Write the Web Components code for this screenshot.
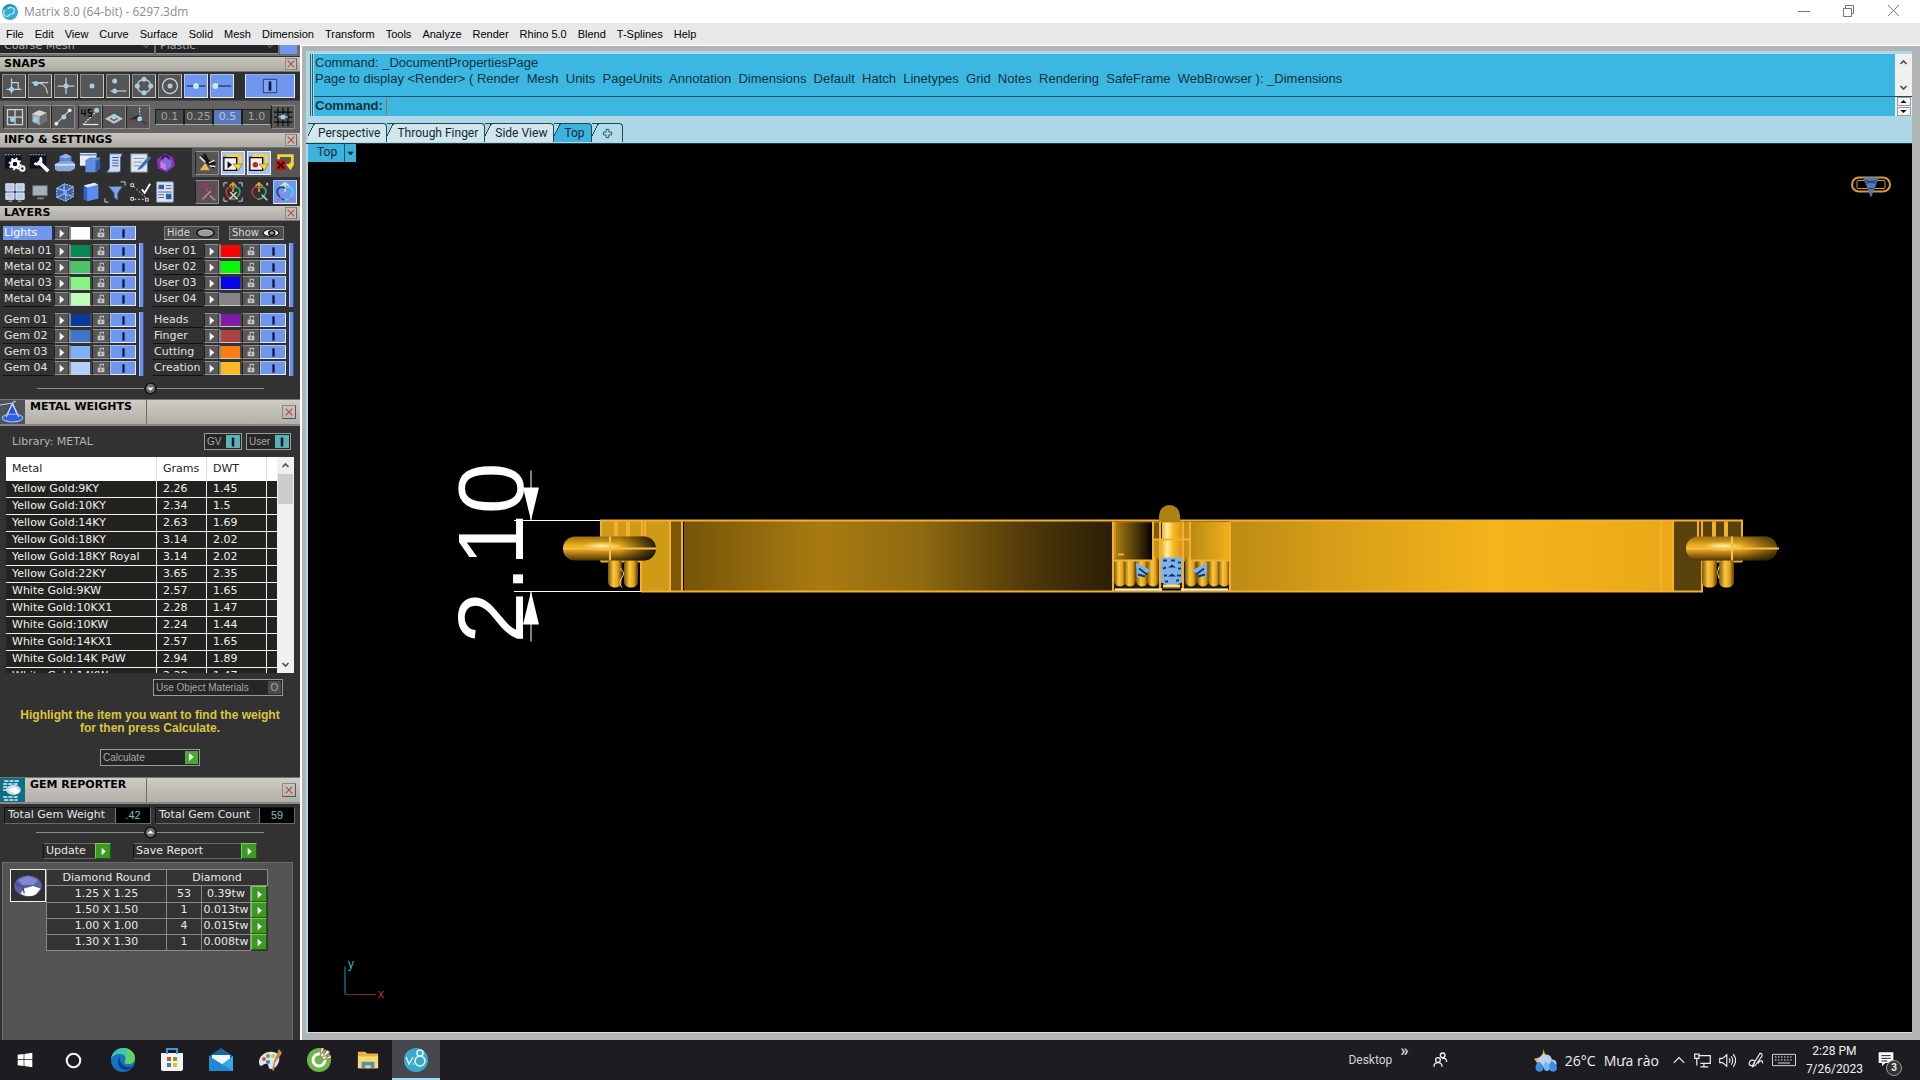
<!DOCTYPE html>
<html lang="en">
<head>
<meta charset="utf-8">
<title>Matrix 8.0</title>
<style>
html, body { margin: 0; height: 100%; background: #323232; overflow: hidden; }
</style>
</head>
<body>
<matrix-app></matrix-app>
<script>
const ICONS = {
  logo: '<circle cx="12" cy="12" r="12" fill="#3aa9cc"/><path d="M5 9a5 5 0 1 0 7 6M13 15a5 5 0 1 0-4-7" fill="none" stroke="#a9e6f5" stroke-width="2"/><path d="M3 7a10 10 0 0 1 15-3" fill="none" stroke="#1b7fa3" stroke-width="2"/>',
  min: '<path d="M6 11.5h12" stroke="#777" fill="none"/>',
  restore: '<path d="M6.5 8.5h8v8h-8zM8.5 8.5v-3h8v8h-2" stroke="#777" fill="none"/>',
  close: '<path d="M6 5l11 11M17 5L6 16" stroke="#777" fill="none"/>',
  x: '<path d="M4 4l16 16M20 4L4 20" stroke="#b0453f" stroke-width="2.5" fill="none"/>',
  perp: '<g stroke="#c9cdd0" stroke-width="1.5" fill="none"><path d="M9 3v18M3 16h18M9 8h8v8"/></g><circle cx="9" cy="16" r="3" fill="#9fd0ee"/>',
  tan: '<path d="M2 8h20M8 8c7 0 12 5 13 13" stroke="#c9cdd0" stroke-width="1.5" fill="none"/><circle cx="7" cy="9" r="3" fill="#9fd0ee"/>',
  cross: '<path d="M12 2v20M2 12h20" stroke="#c9cdd0" stroke-width="1.5"/><circle cx="12" cy="12" r="3" fill="#9fd0ee"/>',
  pt: '<circle cx="12" cy="12" r="3" fill="#9fd0ee"/>',
  near: '<path d="M3 18h19" stroke="#c9cdd0" stroke-width="1.5"/><circle cx="8" cy="6" r="3" fill="#9fd0ee"/><circle cx="8" cy="18" r="3" fill="#9fd0ee"/>',
  quad: '<circle cx="12" cy="12" r="8" stroke="#c9cdd0" stroke-width="1.5" fill="none"/><g fill="#9fd0ee"><circle cx="12" cy="4" r="3"/><circle cx="12" cy="20" r="3"/><circle cx="4" cy="12" r="3"/><circle cx="20" cy="12" r="3"/></g>',
  cen: '<circle cx="12" cy="12" r="9" stroke="#d4d4d4" stroke-width="1.5" fill="none"/><circle cx="12" cy="12" r="3" fill="#9fd0ee"/>',
  mid: '<path d="M1 12h22" stroke="#23345f" stroke-width="1.5"/><circle cx="12" cy="12" r="3.5" fill="#c4ecff"/>',
  end: '<path d="M4 12h19" stroke="#23345f" stroke-width="1.5"/><circle cx="4" cy="12" r="3.5" fill="#c4ecff"/>',
  on: '<path d="M2 2h20v20H2z" fill="#7ea2f5" stroke="#27407f" stroke-width="1.5"/><path d="M12 5v14" stroke="#0c1634" stroke-width="4"/>',
  grid2: '<path d="M3 3h18v18H3zM12 3v18M3 12h18" stroke="#d0d4d8" stroke-width="1.5" fill="none"/><circle cx="9" cy="15" r="3" fill="#9fd0ee"/>',
  cubeg: '<path d="M4 8l8-4 9 3v10l-8 5-9-4z" fill="#a8a8a6"/><path d="M13 11l8-4v10l-8 5z" fill="#6f6f6f"/><path d="M4 8l8-4 9 3-8 4z" fill="#d5d5d3"/><circle cx="8" cy="15" r="3" fill="#9fd0ee"/>',
  line2: '<path d="M4 20L20 4" stroke="#c9cdd0" stroke-width="1.5"/><circle cx="4" cy="20" r="2.3" fill="#eee"/><circle cx="20" cy="4" r="2.3" fill="#eee"/><circle cx="13" cy="12" r="3" fill="#9fd0ee"/>',
  deg: '<path d="M4 21L20 5" stroke="#e8e8e8" stroke-dasharray="2 1.5" stroke-width="1.5"/><path d="M4 21h18" stroke="#e8e8e8" stroke-width="1.5"/><path d="M2 3v5h5M6 3v8M14 3h-4v4h4v4h-4" stroke="#0a0a0a" stroke-width="1.5" fill="none"/><circle cx="20" cy="4" r="3" fill="#9fd0ee"/>',
  plane: '<path d="M1 14l11-6 11 6-11 6z" fill="#c2c4c6"/><path d="M7 14l5-3 5 3-5 3z" fill="#55585c"/><circle cx="12" cy="12" r="3" fill="#9fd0ee"/>',
  persp: '<path d="M14 1v12" stroke="#ddd" stroke-width="1.5" stroke-dasharray="2 1.5"/><path d="M1 15l13-6v6z" fill="#13233f"/><path d="M1 15l13 0 9 6" stroke="#7d2730" stroke-width="2" fill="none"/><circle cx="14" cy="14" r="3" fill="#9fd0ee"/>',
  hash: '<path d="M1 6h22M1 12h22M1 18h22M6 1v22M12 1v22M18 1v22" stroke="#0a0a0a" stroke-width="1.5"/><path d="M6 12h12" stroke="#9fd0ee" stroke-width="1.5"/><circle cx="12" cy="12" r="3" fill="#9fd0ee"/>',
  gears: '<path d="M1 2h18v16H1z" fill="#0b1020"/><path d="M1 3h18" stroke="#b9c3dd" stroke-dasharray="2 1"/><circle cx="12" cy="13" r="4" fill="none" stroke="#fff" stroke-width="3"/><circle cx="12" cy="13" r="6" fill="none" stroke="#fff" stroke-width="2" stroke-dasharray="2 2.7"/><circle cx="20" cy="18" r="2.5" fill="none" stroke="#fff" stroke-width="2"/>',
  wrench: '<path d="M1 2h18v16H1z" fill="#0b1020"/><path d="M1 3h18" stroke="#b9c3dd" stroke-dasharray="2 1"/><path d="M10 10l11 11" stroke="#fff" stroke-width="4"/><path d="M12 6a4 4 0 1 1-6 6" fill="none" stroke="#fff" stroke-width="3"/>',
  slab: '<path d="M6 5l7-3 6 3v7H6z" fill="#5b87d2"/><path d="M6 5l7-3 6 3-6 2z" fill="#8fb4ee"/><path d="M1 13l6-3h13l3 3v5l-5 3H4l-3-2z" fill="#88a9e0"/><path d="M1 14h22" stroke="#e4edff" stroke-width="1.5"/>',
  boxdoc: '<path d="M1 1h18v14H1z" fill="#e9edf6"/><path d="M1 3h18" stroke="#7d94c2" stroke-width="2"/><path d="M7 9l5-3h11v12l-5 4H7z" fill="#5f8ede"/><path d="M18 10v12l5-4V7z" fill="#2f5bab"/>',
  scroll: '<path d="M6 2h14l-2 4v14c0 2-2 2-3 2H3l3-4z" fill="#cfdcf4" stroke="#4267ac"/><path d="M9 6h7M9 9h7M9 12h7M9 15h7" stroke="#2d4f90"/>',
  note: '<path d="M2 2h18v20H2z" fill="#dfe6ee" stroke="#6d7f98"/><path d="M5 7h12M5 11h9M5 15h6" stroke="#7f91aa"/><path d="M22 4L11 16l-2 4 5-2L24 7z" fill="#3f6fb6"/>',
  purple: '<path d="M3 8l9-6 9 4 2 9-9 7-10-4z" fill="#8d2fb2"/><path d="M7 10l6-4 6 3v7l-6 4-6-3z" fill="#7a6fd8"/><path d="M7 10l6 3v7l-6-3z" fill="#c978e4"/><path d="M9 8c0-5 7-5 7 0" stroke="#3f1460" fill="none" stroke-width="2"/>',
  hands: '<path d="M5 4l7 7 8 6M9 2l4 8 8 3" stroke="#151515" stroke-width="3" fill="none"/><path d="M4 5l6 6" stroke="#ddd" stroke-width="2"/><path d="M10 12l5 8H4z" fill="#f0b64c"/><path d="M14 12l6-3M15 15l6 1" stroke="#eee" stroke-width="1.5"/>',
  rec: '<path d="M2 6h14v14H2z" fill="#eef2f6" stroke="#101010" stroke-width="1.5"/><path d="M5 4h15v9h-3" stroke="#f6d631" stroke-width="3" fill="none"/><path d="M12 13h10l-4 7z" fill="#f6d631" stroke="#6b5a10" stroke-width=".6"/><path d="M6 10l5 4-5 4z" fill="#111"/>',
  recr: '<path d="M2 6h14v14H2z" fill="#eef2f6" stroke="#101010" stroke-width="1.5"/><path d="M5 4h15v9h-3" stroke="#f6d631" stroke-width="3" fill="none"/><path d="M12 13h10l-4 7z" fill="#f6d631" stroke="#6b5a10" stroke-width=".6"/><circle cx="8" cy="14" r="3" fill="#c22"/>',
  recx: '<path d="M5 8V4h15v9h-3" stroke="#f6d631" stroke-width="3" fill="none"/><path d="M13 13h9l-4 7z" fill="#f6d631"/><path d="M2 9h11v11H2z" fill="#c01818"/><path d="M4 11l7 7M11 11l-7 7" stroke="#200" stroke-width="2"/>',
  panes: '<path d="M2 3h9v8H2zM13 3h9v8h-9zM2 13h9v7H2zM13 13h9v7h-9z" fill="#b9cbed" stroke="#f2f6ff"/><path d="M5 22h4M15 22h4" stroke="#ddd"/>',
  monitor: '<path d="M4 5h16v11H4z" fill="#a8afb9" stroke="#63686f"/><path d="M9 19h7" stroke="#7f858e" stroke-width="2"/>',
  cubew: '<path d="M3 8l8-5 10 3v11l-8 5-10-4z" fill="#3b68b4" stroke="#cfe0ff" stroke-dasharray="2 1"/><path d="M3 8l10 3 8-5M13 11v11M11 3v11l-8 4M11 14l10 3" stroke="#bcd3ff" fill="none"/>',
  book: '<path d="M5 5l12-3 4 2v15L9 22l-4-2z" fill="#2f63c7"/><path d="M9 7l12-3v15L9 22z" fill="#5b8ef0"/><path d="M5 5l12-3 4 2-12 3z" fill="#e9eefa"/>',
  funnel: '<path d="M5 6h15l-5 7v8l-4-3v-5z" fill="#7ea8e6" stroke="#3a5f9d"/><path d="M18 1h5v4M1 19v4h4" stroke="#ddd" fill="none"/>',
  nodes: '<path d="M2 3h3v3H2zM2 18h3v3H2zM18 19h3v3h-3z" stroke="#eee" fill="none"/><path d="M5 6l14 13M6 20h12" stroke="#eee" stroke-dasharray="2 2"/><path d="M14 9l3 4 6-10" stroke="#fff" stroke-width="2" fill="none"/>',
  report: '<path d="M3 1h18v22H3z" fill="#dce6f2" stroke="#8aa0bd"/><path d="M5 4h6v5H5zM13 14h6v6h-6z" fill="#345a98"/><path d="M13 5h6M13 8h6M5 12h14M5 15h6M5 18h6" stroke="#345a98"/>',
  knot: '<g fill="none" stroke-width="1.8"><path d="M12 3v9" stroke="#a04d50"/><path d="M12 6c-6-4-10 2-7 8 2 3 5 4 7 3" stroke="#b3266e"/><path d="M12 6c6-4 10 2 7 8-2 3-5 4-7 3" stroke="#8e2d63"/><path d="M7 20l9-9M21 21l-6-5" stroke="#a88"/></g>',
  knot2: '<path d="M2 6V2h4M18 2h4v4M2 18v4h4M18 22h4v-4" stroke="#ddd" fill="none"/><g fill="none" stroke-width="1.8"><path d="M12 2v10M8 6l4-4 4 4" stroke="#e6a12c"/><path d="M12 8c-5-4-9 2-7 6 2 4 5 6 9 6" stroke="#b83a32"/><path d="M12 8c5-4 9 2 7 6-2 4-5 6-9 6" stroke="#2ea57e"/><path d="M8 20l8-8M17 20l-8-8" stroke="#d8c4b4"/></g>',
  knot3: '<g fill="none" stroke-width="1.8"><path d="M12 2v10M8 6l4-4 4 4" stroke="#e6a12c"/><path d="M12 8c-5-4-9 2-7 6 2 4 5 6 9 6" stroke="#b83a32"/><path d="M12 8c5-4 9 2 7 6-2 4-5 6-9 6" stroke="#2ea57e"/><path d="M15 15l6 6M21 2v3" stroke="#d8c4b4"/></g>',
  knot4: '<g fill="none" stroke-width="1.8"><path d="M12 2v10M7 6l5-4 5 4" stroke="#e9dfae"/><path d="M12 8c-6-4-10 2-8 6 2 4 6 7 9 7" stroke="#27407f"/><path d="M12 8c6-4 10 2 8 6-2 4-6 7-9 7" stroke="#3edbf0"/><path d="M3 21l6-4M21 21l-6-4" stroke="#d65fb0"/></g>',
  tri: '<path d="M8 3l10 9-10 9z" fill="#f4f4f4"/>',
  lock: '<path d="M4 11h16v11H4z" fill="#c4c4c4"/><path d="M10 11V3h8v5" stroke="#c4c4c4" stroke-width="2.5" fill="none"/><path d="M12 14v5" stroke="#444" stroke-width="2.5"/>',
  bar: '<path d="M12 3v18" stroke="#0b1538" stroke-width="5"/>',
  oval: '<ellipse cx="12" cy="12" rx="11" ry="7" fill="#9a9a9a" stroke="#111" stroke-width="2"/><path d="M4 10c3-4 13-4 16 0" stroke="#ccc" fill="none"/>',
  eye: '<path d="M1 12c4-9 18-9 22 0-4 8-18 8-22 0z" fill="#f2f2f2" stroke="#111" stroke-width="1.5"/><circle cx="13" cy="12" r="4" fill="#999" stroke="#000" stroke-width="2"/>',
  down: '<circle cx="12" cy="12" r="10" fill="#6a6a6a" stroke="#101010" stroke-width="2.5"/><path d="M6 10h12l-6 6z" fill="#fff"/>',
  up: '<circle cx="12" cy="12" r="10" fill="#6a6a6a" stroke="#101010" stroke-width="2.5"/><path d="M6 14h12l-6-6z" fill="#fff"/>',
  scale: '<rect width="24" height="24" fill="#505256"/><path d="M12 4l6 14H5z" fill="#1f53cf" stroke="#dbe6ff"/><ellipse cx="12" cy="18" rx="10" ry="4" fill="#2e63e0" stroke="#a9c0f5"/><path d="M0 5l12-2 3-2M12 3l6 14M12 3L6 17" stroke="#bdd2ff" fill="none"/>',
  gemrep: '<rect width="24" height="24" fill="#0d6e86"/><path d="M4 3h14M3 6h14M3 9h9M3 12h5M3 19h15M4 22h13" stroke="#d8f4fa" stroke-width="1.5" stroke-dasharray="4 1"/><ellipse cx="13" cy="12" rx="7" ry="5" fill="#c9dfe8"/><path d="M8 12l6-3 5 4-4 3z" fill="#fff"/>',
  gtri: '<path d="M8 4l9 8-9 8z" fill="#fff"/>',
  gem: '<ellipse cx="12" cy="12" rx="11" ry="8.5" fill="#5961a8"/><path d="M4 7l8-3 8 3-3 4H7z" fill="#7f8bd0"/><path d="M6 18l3-4 7-2 6 2-4 5c-4 2-9 1-12-1z" fill="#fff"/><path d="M2 10l6 3 1 5" stroke="#3c4690" fill="none"/>',
  chevU: '<path d="M4 16l8-8 8 8" stroke="#505050" stroke-width="4.5" fill="none"/>',
  chevD: '<path d="M4 8l8 8 8-8" stroke="#505050" stroke-width="4.5" fill="none"/>',
  spinU: '<path d="M1 19h22L12 5z" fill="#111"/>',
  spinD: '<path d="M1 5h22L12 19z" fill="#111"/>',
  plus: '<path d="M9 3h6v6h6v6h-6v6H9v-6H3V9h6z" fill="none" stroke="#1d5568" stroke-width="2"/>',
  win: '<path d="M1 4l9-1v8H1zM11 3l12-2v10H11zM1 12h9v9l-9-1zM11 12h12v11l-12-2z" fill="#fff"/>',
  cortana: '<circle cx="12" cy="12" r="9.5" fill="none" stroke="#f4f4f4" stroke-width="3"/>',
  edge: '<circle cx="12" cy="12" r="12" fill="#1673c4"/><path d="M0 11C1 4 6 0 12 0c7 0 12 5 12 10 0 4-3 6-7 6-3 0-4-1-3-3 2-4-1-7-5-7-4 0-8 2-9 5z" fill="#3cc6b0"/><path d="M12 0c7 0 12 5 12 10 0 4-3 6-7 6-3 0-4-1-3-3 1-2 1-4 0-5 4-1 2-6-2-8z" fill="#62d06b"/><path d="M9 9c-4 4-2 12 5 13 4 0 7-2 8-4-8 3-14-2-13-9z" fill="#0b3e86"/>',
  store: '<path d="M1 5h22v16q0 2-2 2H3q-2 0-2-2z" fill="#f3f3f3"/><path d="M7 6V1h10v5" stroke="#3a9bdc" stroke-width="2" fill="none"/><path d="M7 9h4v4H7z" fill="#d9512c"/><path d="M13 9h4v4h-4z" fill="#77a52b"/><path d="M7 15h4v4H7z" fill="#2a7fc4"/><path d="M13 15h4v4h-4z" fill="#e9b52a"/>',
  mail: '<path d="M0 8l12-8 12 8v15H0z" fill="#1a64a8"/><path d="M3 7h18v10H3z" fill="#eef6fc"/><path d="M0 8l12 9 12-9v15H0z" fill="#3aa8e6"/><path d="M0 8l24 15H0z" fill="#2089d2"/>',
  paint: '<path d="M1 14C1 8 8 3 15 4c6 1 7 5 6 9-1 5-5 8-8 8-4 0-1-4-4-5-3-1-4 2-6 2-1 0-2-2-2-4z" fill="#dde5ee"/><circle cx="6" cy="11" r="2" fill="#d4553f"/><circle cx="10" cy="8" r="2" fill="#57a845"/><circle cx="15" cy="8" r="2" fill="#e7bd38"/><circle cx="10" cy="14" r="2" fill="#3d7ec7"/><path d="M21 1l3 4-7 10-1 8-2-1 2-9z" fill="#c08a58"/>',
  coc: '<circle cx="12" cy="12" r="12" fill="#6cb74a"/><circle cx="12" cy="12" r="6" fill="none" stroke="#fff" stroke-width="3"/><path d="M13 9l1-9h3zM15 10l5-8 3 2zM16 12l8-5v3z" fill="#fff" stroke="#b5533f" stroke-width=".7"/>',
  folder: '<path d="M1 3h8l2 2h12v16H1z" fill="#e9b43c"/><path d="M1 8h22v13H1z" fill="#fbd876"/><path d="M5 21v-7h14v7h-4v-3H9v3z" fill="#4f93c0"/>',
  v8: '<circle cx="12" cy="12" r="12" fill="#3aa9cc"/><path d="M2 9l3 7 4-7M9 16h1" stroke="#e8faff" stroke-width="1.3" fill="none"/><circle cx="16" cy="13" r="5" fill="none" stroke="#e8faff" stroke-width="1.5"/><circle cx="16" cy="5" r="3" fill="none" stroke="#e8faff" stroke-width="1.5"/>',
  people: '<g fill="none" stroke="#f0f0f0" stroke-width="2"><circle cx="9" cy="12" r="3.5"/><path d="M3 22c0-8 12-8 12 0"/><circle cx="16" cy="5" r="3.5"/><path d="M15 10c4-2 7 1 7 5"/></g>',
  weather: '<path d="M11 1c0 5-3 9-9 9 2 5 8 7 13 4z" fill="#f0b040"/><path d="M7 18a5 5 0 0 1 1-9 6 6 0 0 1 11 2 4 4 0 0 1 1 8z" fill="#bcd0ee"/><path d="M6 13c-8 10 5 13 5 6 0-2-2-5-5-6zM19 12c-9 11 5 14 5 7 0-2-2-5-5-7z" fill="#3f8fe0"/><path d="M13 13c-6 9 4 12 4 6 0-2-2-5-4-6z" fill="#6fb6f4"/>',
  tup: '<path d="M3 17l9-9 9 9" stroke="#f0f0f0" stroke-width="2" fill="none"/>',
  net: '<path d="M6 5h17v11H9M14 16v5M9 21h11M1 3h6v6H1zM4 9v10" stroke="#f0f0f0" stroke-width="1.7" fill="none"/>',
  vol: '<path d="M1 9h4l6-5v16l-6-5H1zM14 9q3 3 0 6M17 6q5 6 0 12M20 3q7 9 0 18" stroke="#f0f0f0" stroke-width="1.6" fill="none"/>',
  pen: '<path d="M8 18L18 2q4 0 3 4L11 20l-4 2zM2 19c-2-8 9-9 8-3-1 4-6 6-8 3zM15 17q6-8 7 0" stroke="#f0f0f0" stroke-width="1.7" fill="none"/>',
  kbd: '<path d="M.5 4.5h23v15H.5z" stroke="#f0f0f0" fill="none"/><path d="M3 8h18M3 12h18" stroke="#f0f0f0" stroke-dasharray="1.5 1.5" stroke-width="1.5"/><path d="M6 16h12" stroke="#f0f0f0"/>',
  notif: '<path d="M1 2h22v16H11l-5 5v-5H1z" fill="#fff"/><path d="M5 7h14M5 11h14M5 15h9" stroke="#1c1c1f" stroke-width="1.5"/>',
  caret: '<path d="M1 6h22L12 19z" fill="#0b2b38"/>'
};
const icon = (n, w = 16, h = w) => `<svg viewBox="0 0 24 24" width="${w}" height="${h}" preserveAspectRatio="none" aria-hidden="true">${ICONS[n]}</svg>`;

const RESET = `
*{box-sizing:border-box}
button,input,select{font:inherit;color:inherit;margin:0;padding:0;border:0;background:none;border-radius:0;outline:0}
button{display:flex;align-items:center;justify-content:center}
svg{display:block;flex:none}
`;
class Part extends HTMLElement {
  constructor() { super(); this.attachShadow({ mode: 'open' }); }
  connectedCallback() { this.shadowRoot.innerHTML = `<style>${RESET}${this.css()}</style>${this.view()}`; }
  css() { return ':host{display:block}'; }
  view() { return '<slot></slot>'; }
  a(n, d = '') { return this.getAttribute(n) ?? d; }
}
const def = (name, css, view) => customElements.define(name, class extends Part {
  css() { return css; }
  view() { return view(this); }
});

def('title-bar', `
:host{display:flex;align-items:center;height:23px;flex:none;background:#fff;color:#8c8c8c;font:12px "Open Sans",sans-serif;padding:0 14px 0 2px;gap:6px}
span{flex:1;line-height:16px}
nav{display:flex;gap:21px}`,
() => `${icon('logo', 16)}<span>Matrix 8.0 (64-bit) - 6297.3dm</span><nav>${['min', 'restore', 'close'].map(n => `<button aria-label="${n}">${icon(n, 24)}</button>`).join('')}</nav>`);

def('menu-bar', `
:host{display:flex;align-items:center;height:22px;flex:none;background:#e8e8e8;color:#000;font:11px "Liberation Sans",sans-serif;padding-left:6px;gap:11px}`,
() => 'File,Edit,View,Curve,Surface,Solid,Mesh,Dimension,Transform,Tools,Analyze,Render,Rhino 5.0,Blend,T-Splines,Help'.split(',').map(t => `<button>${t}</button>`).join(''));

/* bevelled tool button */
def('tool-button', `
:host{display:block;width:24px;height:24px}
button{width:100%;height:100%}
:host([look=raised]) button{background:#555;border:1px solid #8e8e8e;border-right-color:#c8c8c8;border-bottom-color:#d0d0d0}
:host([look=flat]) button{background:#555;border:1px solid #8e8e8e;border-left-color:#222}
:host([look=on]) button{background:#7096ee;border:1px solid #a8c0f8;border-right-color:#dfe8ff;border-bottom-color:#f0f4ff}
:host([look=lit]) button{background:#a9c2f2;border:1px solid #e8efff}
:host([look=wide]){width:50px}
:host([look=wide]) button{background:#7096ee;border:1px solid #dfe8ff;border-top-color:#8fadf5}`,
e => `<button aria-label="${e.a('icon')}">${icon(e.a('icon'), +e.a('size', '20'))}</button>`);

/* title strip of a palette section */
def('section-head', `
:host{display:flex;height:15px;flex:none;align-items:center;justify-content:space-between;background:linear-gradient(#c9c6bf,#aeaba4);border-bottom:1px solid #77756f;color:#000;padding:0 3px 0 4px}
h2{margin:0;font:bold 11px/14px "DejaVu Sans",sans-serif}
button{width:12px;height:12px;border:1px solid #8a8781;background:#c3c0b8;border-right-color:#6b6964}`,
() => `<h2><slot></slot></h2><button aria-label="Close">${icon('x', 10)}</button>`);

/* tall title strip with picture */
def('panel-head', `
:host{display:flex;height:27px;flex:none;background:linear-gradient(#cfccc5,#b3b0a9);border-top:1px solid #77756f;border-bottom:2px solid #8a8882;color:#000}
h2{margin:0;width:122px;border-right:1px solid #6d6b66;padding-left:5px;font:bold 11px/14px "DejaVu Sans",sans-serif}
div{flex:1;display:flex;align-items:center;justify-content:flex-end;padding-right:4px}
button{width:14px;height:14px;border:1px solid #8a8781;border-right-color:#555;border-bottom-color:#555}`,
e => `${icon(e.a('icon'), 25, 24)}<h2><slot></slot></h2><div><button aria-label="Close">${icon('x', 10)}</button></div>`);

def('fold-line', `
:host{display:flex;align-items:center;margin:0 36px;height:14px;flex:none}
i{flex:1;height:1px;background:#8b8b8b}`,
e => `<i></i><button aria-label="Fold">${icon(e.a('dir'), 13)}</button><i></i>`);

def('render-row', `
:host{display:flex;align-items:flex-end;height:12px;flex:none;overflow:hidden;background:#6e6e6e;padding-bottom:2px;gap:2px;border-bottom:1px solid #333;color:#a8a8a8;font:11px/14px "DejaVu Sans",sans-serif}
label{display:flex;height:16px;align-items:center;background:#242424;border-bottom:1px solid #999;flex:none;padding-right:4px}
.mesh{width:154px}
.mat{width:122px}
select{appearance:none;flex:1;min-width:0;height:15px;padding-left:4px}
button{width:17px;height:16px;background:#7096ee;flex:none}`,
() => `<label class="mesh"><select aria-label="Mesh"><option>Coarse Mesh</option></select>${icon('chevD', 8)}</label><label class="mat"><select aria-label="Material"><option>Plastic</option></select>${icon('chevD', 8)}</label><button aria-label="Colour"></button>`);

def('snap-panel', `
:host{display:block;flex:none}
.r{display:flex;align-items:center;background:#303030;height:28px;padding-left:2px;gap:2px}
.r tool-button:last-child{margin-left:9px}
.s{display:flex;align-items:center;background:#646464;height:33px;padding-left:3px;border-top:1px solid #444}
.n{display:flex;margin-left:5px;font:11px/14px "DejaVu Sans",sans-serif;color:#a2a2a2}
.n button{width:29px;height:16px;background:#484848;border:1px solid #1c1c1c;border-bottom-color:#aaa}
.n button:nth-child(3){background:#5a78bf;color:#b7c4e8}
.g{margin-left:3px}`,
() => {
  const r = (l, look) => l.split(' ').map(n => `<tool-button look="${look}" icon="${n}"></tool-button>`).join('');
  return `<div class="r">${r('perp tan cross pt near quad cen', 'raised')}${r('mid end', 'on')}<tool-button look="wide" icon="on" size="16"></tool-button></div>
<div class="s">${r('grid2 cubeg line2', 'flat')}<tool-button class="g" look="flat" icon="deg"></tool-button>${r('plane persp', 'flat')}<div class="n">${['0.1', '0.25', '0.5', '1.0'].map(t => `<button>${t}</button>`).join('')}</div><tool-button look="flat" icon="hash"></tool-button></div>`;
});

def('info-panel', `
:host{display:block;flex:none;height:58px;background:#303030}
.r{display:flex;height:29px}
.l,.m{display:flex;align-items:center}
.l{width:192px;padding-left:3px;gap:1px}
.m{flex:1;padding:0 3px;justify-content:space-between}
.g{background:#565656}`,
() => {
  const r = l => l.split(' ').map(s => { const [n, k] = s.split(':'); return `<tool-button look="${k || 'none'}" icon="${n}" size="22"></tool-button>`; }).join('');
  return `<div class="r"><div class="l">${r('gears wrench slab boxdoc scroll note purple')}</div><div class="m g">${r('hands:flat rec:lit recr:lit recx')}</div></div>
<div class="r"><div class="l">${r('panes monitor cubew book funnel nodes report')}</div><div class="m">${r('knot:flat knot2 knot3 knot4:on')}</div></div>`;
});

def('layer-row', `
:host{display:flex;height:16px;align-items:center;width:133px;color:#e2e2e2}
span{flex:1;font:11px/14px "DejaVu Sans",sans-serif;white-space:nowrap;height:15px;border-bottom:1px solid #111;margin-right:1px;padding-left:1px}
:host([sel]) span{background:#7096ee;color:#fff;height:14px;border:0;margin-right:2px}
button{height:14px;background:#585858;border:1px solid #8e8e8e;border-left-color:#222;border-right-color:#333;width:15px}
.c{width:23px;background:var(--c);border:2px solid #888;border-top:1px solid #333;border-bottom:1px solid #ccc;border-right-color:#444}
.k{width:18px}
.t{width:26px;background:#7096ee;border-color:#a9c0f5 #e6edff #e6edff #a9c0f5}`,
e => `<span><slot></slot></span><button aria-label="Open">${icon('tri', 11)}</button><button class="c" style="--c:${e.a('c')}" aria-label="Colour"></button><button class="k" aria-label="Lock">${icon('lock', 10)}</button><button class="t" aria-label="Visible">${icon('bar', 11)}</button>`);

def('layer-group', `
:host{display:flex;gap:3px}
button{width:5px;height:64px;background:#6a90ec;border-left:1px solid #a9c0f5;border-right:1px solid #35508f}`,
() => `<div><slot></slot></div><button aria-label="Toggle group"></button>`);

def('layers-panel', `
:host{display:block;flex:none;height:178px;padding:4px 6px 0 3px}
.top,.two{display:flex;justify-content:space-between}
.top{align-items:center;margin-bottom:2px}
.b{display:flex;gap:10px;padding-right:10px}
.b button{height:14px;width:55px;justify-content:space-between;padding:0 3px 0 2px;background:#4c4c4c;border:1px solid #7d7d7d;border-bottom-color:#c0c0c0;color:#d8d8d8;font:10px/12px "DejaVu Sans",sans-serif}
.two{margin-bottom:5px}
fold-line{margin:4px 30px 0 34px}`,
() => {
  const g = l => `<layer-group>${l.map(([t, c]) => `<layer-row c="${c}">${t}</layer-row>`).join('')}</layer-group>`;
  return `<div class="top"><layer-row sel c="#fff">Lights</layer-row><div class="b"><button>Hide ${icon('oval', 19, 14)}</button><button>Show ${icon('eye', 18, 14)}</button></div></div>
<div class="two">${g([['Metal 01', '#058a55'], ['Metal 02', '#4bc46a'], ['Metal 03', '#84f583'], ['Metal 04', '#bfffba']])}${g([['User 01', '#f80404'], ['User 02', '#08f808'], ['User 03', '#0606e8'], ['User 04', '#858585']])}</div>
<div class="two">${g([['Gem 01', '#073a9b'], ['Gem 02', '#4274cc'], ['Gem 03', '#7fb0f8'], ['Gem 04', '#b2d0fb']])}${g([['Heads', '#7b1da6'], ['Finger', '#ab4244'], ['Cutting', '#fb7b14'], ['Creation', '#fcb924']])}</div>
<fold-line dir="down"></fold-line>`;
});

def('metal-panel', `
:host{display:flex;flex-direction:column;flex:none;height:351px;padding:7px 6px 0;font:11px/14px "DejaVu Sans",sans-serif;color:#f0f0f0}
.lib{display:flex;gap:4px;align-items:center;padding:0 3px 0 6px;color:#b4b4b4;height:17px}
.lib span{flex:1}
.tg{height:17px;width:38px;border:1px solid #9a9a9a;background:#262626;color:#a6a6a6;font:10px/12px "Liberation Sans",sans-serif;justify-content:space-between;padding:1px 1px 1px 2px}
.tg.u{width:45px}
.tg b{width:14px;height:13px;background:#5bb3b1;display:flex;justify-content:center;align-items:center}
.list{display:flex;height:216px;margin-top:7px;overflow:hidden;flex:none}
.clip{flex:1;overflow:hidden}
table{border-collapse:separate;border-spacing:0;width:100%;table-layout:fixed}
th{background:#fff;color:#222;font-weight:normal;text-align:left;height:24px;padding:0 0 0 6px;border-right:1px solid #ddd}
td{height:17px;padding:0 0 0 6px;background:#22221f;border-right:1px solid #f0f0f0;border-bottom:1px solid #f0f0f0;line-height:14px}
tr>*:last-child{border-right:0}
.sb{width:17px;background:#f0f0f0;display:flex;flex-direction:column;align-items:center}
.sb button{width:17px;height:17px}
.sb i{width:15px;height:30px;background:#cdcdcd}
.sb u{flex:1}
.use,.calc{height:17px;border:1px solid #9a9a9a;background:#262626;color:#a6a6a6;font:10px/12px "Liberation Sans",sans-serif;justify-content:space-between;padding:0 1px 0 2px;flex:none}
.use{width:130px;align-self:flex-end;margin:6px 11px 0 0}
.use b{width:13px;height:13px;background:#4c4c4c;display:flex;align-items:center;justify-content:center;font-weight:normal}
p{margin:13px 0 0;color:#dcc53c;text-align:center;font:bold 12px/13px "Liberation Sans",sans-serif}
.calc{width:100px;align-self:center;margin-top:14px}
.calc b{width:13px;height:13px;background:#4fa836}`,
() => {
  const rows = `Yellow Gold:9KY|2.26|1.45
Yellow Gold:10KY|2.34|1.5
Yellow Gold:14KY|2.63|1.69
Yellow Gold:18KY|3.14|2.02
Yellow Gold:18KY Royal|3.14|2.02
Yellow Gold:22KY|3.65|2.35
White Gold:9KW|2.57|1.65
White Gold:10KX1|2.28|1.47
White Gold:10KW|2.24|1.44
White Gold:14KX1|2.57|1.65
White Gold:14K PdW|2.94|1.89
White Gold:14KW|2.28|1.47`.split('\n').map(r => `<tr>${r.split('|').map(c => `<td>${c}</td>`).join('')}<td></td></tr>`).join('');
  return `<div class="lib"><span>Library: METAL</span><button class="tg" aria-pressed="true">GV <b>${icon('bar', 12)}</b></button><button class="tg u" aria-pressed="true">User <b>${icon('bar', 12)}</b></button></div>
<div class="list"><div class="clip"><table><colgroup><col style="width:151px"><col style="width:50px"><col style="width:60px"><col></colgroup><thead><tr><th>Metal</th><th>Grams</th><th>DWT</th><th></th></tr></thead><tbody>${rows}</tbody></table></div>
<div class="sb"><button aria-label="Up">${icon('chevU', 9)}</button><i></i><u></u><button aria-label="Down">${icon('chevD', 9)}</button></div></div>
<button class="use">Use Object Materials <b>O</b></button>
<p>Highlight the item you want to find the weight<br>for then press Calculate.</p>
<button class="calc">Calculate <b>${icon('gtri', 12)}</b></button>`;
});

def('gem-panel', `
:host{display:flex;flex-direction:column;flex:1;min-height:0;padding-top:3px;font:11px/14px "DejaVu Sans",sans-serif;color:#e8e8e8}
.tot{display:flex;gap:4px;padding:0 5px 0 4px;height:17px;margin-bottom:1px;flex:none}
.tot div{display:flex;flex:1;border:1px solid #686868;border-top-color:#111;border-left-color:#111;background:#2c2c2c}
.tot div:first-child{flex:none;width:147px}
.tot span{flex:1;padding-left:3px;white-space:nowrap}
.tot output{width:35px;background:#000;border-left:1px solid #777;color:#6cc5c8;text-align:center;font:11px/15px "Liberation Sans",sans-serif}
.act{display:flex;gap:22px;padding:4px 0 3px 43px;height:23px;flex:none}
.act button{justify-content:space-between;height:16px;width:68px;border:1px solid #666;border-left-color:#111;border-right:0;padding-left:2px;background:#303030}
.act button+button{width:124px}
.g{width:16px;height:16px;background:#3c9a22;border:1px solid #7fc86c;border-right-color:#1d5a10;border-bottom-color:#1d5a10;display:flex;align-items:center;justify-content:center}
.area{flex:1;display:flex;align-items:flex-start;margin:0 7px 0 2px;padding:6px 0 0 7px;background:#545454;border:1px solid #6d6d6d;border-bottom:0}
.pic{width:36px;height:33px;border:1px solid #eee;background:#303030;display:flex;align-items:center;justify-content:center}
table{border-collapse:collapse;table-layout:fixed;width:221px;background:#333}
th,td{height:16px;padding:0;font-weight:normal;text-align:center;border:1px solid #8a8a8a;line-height:14px;white-space:nowrap}
td:last-child{border:0}
td button{width:17px;height:15px}`,
() => {
  const g = `<b class="g">${icon('gtri', 11)}</b>`;
  const rows = [['1.25 X 1.25', '53', '0.39tw'], ['1.50 X 1.50', '1', '0.013tw'], ['1.00 X 1.00', '4', '0.015tw'], ['1.30 X 1.30', '1', '0.008tw']].map(r => `<tr>${r.map(c => `<td>${c}</td>`).join('')}<td><button class="g" aria-label="Go">${icon('gtri', 11)}</button></td></tr>`).join('');
  return `<div class="tot"><div><span>Total Gem Weight</span><output>.42</output></div><div><span>Total Gem Count</span><output>59</output></div></div>
<fold-line dir="up"></fold-line>
<div class="act"><button>Update ${g}</button><button>Save Report ${g}</button></div>
<div class="area"><div class="pic">${icon('gem', 30)}</div><table><colgroup><col style="width:120px"><col style="width:35px"><col style="width:49px"><col style="width:17px"></colgroup><thead><tr><th>Diamond Round</th><th colspan="3">Diamond</th></tr></thead><tbody>${rows}</tbody></table></div>`;
});

def('side-palette', `
:host{display:flex;flex-direction:column;width:300px;flex:none;background:#323232;overflow:hidden}`,
() => `<render-row></render-row>
<section-head>SNAPS</section-head><snap-panel></snap-panel>
<section-head>INFO &amp; SETTINGS</section-head><info-panel></info-panel>
<section-head>LAYERS</section-head><layers-panel></layers-panel>
<panel-head icon="scale">METAL WEIGHTS</panel-head><metal-panel></metal-panel>
<panel-head icon="gemrep">GEM REPORTER</panel-head><gem-panel></gem-panel>`);

def('command-box', `
:host{display:block;flex:none;margin:3px 0 0 4px;border-left:1px solid #245e72;padding-left:1px;color:#0c3240;font:13px/16px "Liberation Sans",sans-serif}
.w{border-left:1px solid #245e72;padding-left:1px;display:grid;grid-template-columns:1fr 17px;grid-template-rows:42px 20px}
.h{background:#3cb7e1;padding:1px 1px 0;white-space:pre;overflow:hidden}
.c{background:#3cb7e1;border-top:1px solid #14506a;padding:0 0 2px 1px;display:flex;align-items:center;gap:3px}
.c label{font-weight:bold}
.c input{flex:1;height:16px;border-left:1px solid #b06a4a}
.s,.n{background:#f0f0f0;display:flex;flex-direction:column;align-items:center;justify-content:space-between}
.s{padding:4px 0}
.n{border-top:1px solid #14506a}
.n button{width:14px;height:9px;border:1px solid #999;background:#f4f4f4}`,
() => `<div class="w"><div class="h">Command: _DocumentPropertiesPage
Page to display &lt;Render&gt; ( Render  Mesh  Units  PageUnits  Annotation  Dimensions  Default  Hatch  Linetypes  Grid  Notes  Rendering  SafeFrame  WebBrowser ): _Dimensions</div>
<div class="s"><button aria-label="Up">${icon('chevU', 9)}</button><button aria-label="Down">${icon('chevD', 9)}</button></div>
<div class="c"><label for="cmd">Command:</label><input id="cmd" type="text"></div>
<div class="n"><button aria-label="Previous">${icon('spinU', 7, 5)}</button><button aria-label="Next">${icon('spinD', 7, 5)}</button></div></div>`);

def('view-tab', `
:host{display:block}
button{height:19px;padding:0 6px 0 10px;border:1px solid #1f4a5a;border-bottom:0;border-left:0;border-top-right-radius:4px;background:linear-gradient(118deg,transparent 5px,#1f4a5a 5px,#1f4a5a 6px,#d3e6ea 6px);line-height:17px}
:host([on]) button{background:linear-gradient(118deg,transparent 5px,#1f4a5a 5px,#1f4a5a 6px,#3cb2dc 6px)}
:host([add]) button{background:linear-gradient(118deg,transparent 5px,#1f4a5a 5px,#1f4a5a 6px,#b3dbe8 6px);padding:0 9px 0 10px}`,
() => `<button><slot></slot></button>`);

def('view-tabs', `
:host{display:flex;height:28px;flex:none;align-items:flex-end;padding:0 0 1px 2px;background:#aed8e6;border-bottom:1px solid #1b3d49;color:#0e2b36;font:12px "Roboto",sans-serif}`,
() => `<view-tab>Perspective</view-tab><view-tab>Through Finger</view-tab><view-tab>Side View</view-tab><view-tab on>Top</view-tab><view-tab add>${icon('plus', 11)}</view-tab>`);

def('model-scene', `
:host{display:block;width:100%;height:100%}
svg{width:100%;height:100%}`,
() => {
  const lin = (id, v, ...s) => `<linearGradient id="${id}" ${v ? 'x2="0" y2="1"' : ''}>${s.map(([o, c]) => `<stop offset="${o}" stop-color="${c}"/>`).join('')}</linearGradient>`;
  const prong = (x, y, w, h) => `<rect x="${x}" y="${y}" width="${w}" height="${h}" rx="6" fill="url(#pr)"/>`;
  const gem = 'fill="#7fb2ea"';
  return `<svg viewBox="308 144 1604 887" role="img" aria-label="Ring model, top view">
<defs>${lin('b1', 0, [0, '#765509'], [.32, '#a97b11'], [.55, '#8f6a10'], [.8, '#50390a'], [1, '#2a1e05'])}
${lin('b2', 0, [0, '#bd8b14'], [.25, '#d99f18'], [.6, '#f5b41b'], [1, '#e9a818'])}
${lin('k1', 0, [0, '#a87c12'], [.9, '#150f02'], [1, '#000'])}
${lin('k2', 0, [0, '#b98a12'], [1, '#eeb01d'])}
${lin('pr', 0, [0, '#7b560a'], [.4, '#fcc83c'], [.7, '#e0a11c'], [1, '#5b3f07'])}
${lin('cy', 0, [0, '#e9a81c'], [.3, '#fff0a0'], [.6, '#f5b81f'], [1, '#d5961a'])}
${lin('tu', 1, [0, '#9a6d0e'], [.4, '#f3b520'], [.6, '#d8991a'], [1, '#4a3306'])}
${lin('td', 0, [0, 'rgba(0,0,0,0)'], [.6, 'rgba(0,0,0,0)'], [1, 'rgba(0,0,0,.85)'])}
<radialGradient id="gl"><stop offset="0" stop-color="#fff3b0"/><stop offset="1" stop-color="#fff3b0" stop-opacity="0"/></radialGradient></defs>
<rect x="684" y="520" width="430" height="71" fill="url(#b1)"/><rect x="1231" y="520" width="443" height="71" fill="url(#b2)"/>
<path d="M600 520h71v71h-30v-30h-41z" fill="#cf9a15"/><rect x="671" y="520" width="12" height="71" fill="#7d5707"/>
<path d="M1674 520h68v41h-40v30h-28z" fill="#5a420c"/>
<g stroke="#f2b02e" stroke-width="2" fill="none"><path d="M601 561v-41h1141v41M641 591h1061v-30h40M601 561h40v30M670 521v70M682 521v70M642 521v16M645 521v16M1673 521v70M1698 521v16M1702 521v16"/>
<path d="M616 521v16M628 521v16M1714 521v16M1726 521v16" stroke-width="4"/></g><path d="M1661 521v70" stroke="#f7be45"/>
${prong(608, 557, 14, 30)}${prong(624, 557, 14, 30)}${prong(1702, 557, 15, 30)}${prong(1719, 557, 15, 30)}
<path d="M620 568q6 4 2 9t0 10M1719 566q-3 6 0 12" stroke="#ffd98a" fill="none"/>
<rect x="563" y="536" width="93" height="24" rx="12" fill="url(#tu)"/><rect x="563" y="536" width="93" height="24" rx="12" fill="url(#td)"/><ellipse cx="602" cy="546" rx="20" ry="5" fill="url(#gl)"/>
<rect x="1686" y="536" width="91" height="24" rx="12" fill="url(#tu)"/><rect x="1686" y="536" width="91" height="24" rx="12" fill="url(#td)" opacity=".7"/><ellipse cx="1723" cy="546" rx="20" ry="5" fill="url(#gl)"/>
<path d="M563 548h93M610 536v24M1686 548h93M1732 536v24" stroke="#f9c04a" stroke-width="2"/>
<path d="M1159 521v-6a10 10 0 0 1 21 0v6z" fill="#ad8112"/>
<rect x="1113" y="521" width="118" height="70" fill="#c8921a"/><rect x="1116" y="522" width="36" height="38" fill="url(#k1)"/><rect x="1191" y="522" width="38" height="38" fill="url(#k2)"/>
<rect x="1152" y="522" width="8" height="17" fill="#7b5a10"/><rect x="1161" y="522" width="21" height="36" fill="url(#cy)"/><rect x="1160" y="522" width="2" height="17" fill="#3a2804"/><rect x="1114" y="561" width="115" height="28" fill="#2a1d04"/>
${[1114, 1124, 1136, 1147, 1185, 1197, 1208, 1218].map(x => prong(x, 555, 12, 31)).join('')}<rect x="1116" y="522" width="36" height="38" fill="url(#k1)"/><rect x="1191" y="522" width="38" height="38" fill="url(#k2)"/>
<g stroke="#f2b02e" stroke-width="2" fill="none"><path d="M1113 521v70M1230 521v70M1114 560h38M1191 560h38M1153 521v39M1190 521v39M1153 539h37M1160 521v70M1183 521v70"/></g>
<path d="M1118 554h6" stroke="#f2b02e" stroke-width="2"/>
<path d="M1136 562l15 8-14 8zM1161 557h21v25q-10 6-21 0zM1207 562l-15 8 14 8z" ${gem}/>
<path d="M1139 568l8 6M1138 574l7 2M1163 560h4M1171 560h4M1178 562h3M1163 568l3-1M1178 568h3M1164 575h3M1177 575h4M1165 581h3M1176 580h3M1204 568l-8 6M1205 574l-7 2" stroke="#173a6b" stroke-width="2" fill="none"/><path d="M1168 567l4-3 4 3zM1168 576l4-3 4 3z" fill="#0e2c55"/>
<path d="M1163 587h17v-3h-17z" fill="#ffdb70"/><path d="M1115 589h113" stroke="#fff6df" stroke-width="2"/><path d="M1162 589h19" stroke="#000" stroke-width="2"/>
<path d="M514 520h86M514 591h127M531 470v50M531 591v50" stroke="#fff"/><path d="M523 487h16l-8 33zM523 624h16l-8-33z" fill="#fff"/>
<text transform="translate(523 643) rotate(-90)" font-family="Liberation Sans, sans-serif" font-size="93" fill="#fff">2.10</text>
<g fill="none" stroke="#d99a2e" stroke-width="2"><rect x="1852" y="177" width="38" height="14" rx="7"/><rect x="1857" y="180" width="28" height="8" rx="1" stroke-width="1"/></g><path d="M1863 177h16l-8 20z" fill="#5478b4"/><path d="M1865 180l12 3M1877 180l-12 3M1868 188h6" stroke="#223c6e"/>
<path d="M345 994v-28" stroke="#1d9aa0"/><path d="M345 994h31" stroke="#8a2323"/>
<text x="348" y="967" font-family="Liberation Sans, sans-serif" font-size="12" fill="#2fb9c4">y</text><text x="378" y="997" font-family="Liberation Sans, sans-serif" font-size="12" fill="#b03a3a">x</text></svg>`;
});

def('view-port', `
:host{display:grid;flex:1;min-height:0;margin:0 0 0 2px;background:#000}
:host>*{grid-area:1/1;min-width:0;min-height:0}
model-scene,.l{grid-area:1/1;min-width:0;min-height:0}
.l{justify-self:start;align-self:start;display:flex;height:18px;background:#3cb2dc;color:#0b2b38;font:12px/17px "Roboto",sans-serif}
.l span{padding:0 7px 0 9px;border-right:1px solid #14506a}
.l button{width:11px}`,
() => `<model-scene></model-scene><div class="l"><span>Top</span><button aria-label="View menu">${icon('caret', 7)}</button></div>`);

def('work-frame', `
:host{display:flex;flex-direction:column;flex:1;min-width:0;border-left:2px solid #fff;border-top:1px solid #fff;background:#b0b4b5;padding:5px 8px 7px 4px}
div{display:flex;flex-direction:column;flex:1;min-height:0;background:#aed8e6;border-bottom:1px solid #ddd}`,
() => `<div><command-box></command-box><view-tabs></view-tabs><view-port></view-port></div>`);

def('task-bar', `
:host{display:flex;height:40px;flex:none;background:#1d1d21;color:#f0f0f0;font:12px "Roboto",sans-serif;justify-content:space-between}
nav,.t{display:flex}
nav button{width:49px}
nav button:last-child{width:48px;background:#47484d;border-bottom:2px solid #9fd8f0;padding-top:2px}
.t{align-items:center;padding-right:12px}
.d{display:flex;align-items:center;gap:8px;color:#d4d4d4;margin-right:23px}
.d sup{font:bold 17px/14px "Roboto",sans-serif;margin-bottom:20px}
.w{display:flex;align-items:center;gap:8px;margin:0 13px 0 84px;font:14px "Open Sans",sans-serif}
.i{display:flex;align-items:center;gap:8px}
.i+.i{margin-left:12px}
time{text-align:center;line-height:18px;margin:0 13px 0 10px}
.n{display:grid;width:32px;height:32px}
.n svg{grid-area:1/1;align-self:start;justify-self:start;margin:7px 0 0 2px}
.n i{grid-area:1/1;align-self:end;justify-self:end;width:16px;height:16px;border-radius:8px;border:1px solid #999;background:#333;font:bold 10px/14px "Roboto",sans-serif;text-align:center;z-index:1;margin-right:6px}`,
() => `<nav>${[['win', 16], ['cortana', 17], ['edge', 24], ['store', 24], ['mail', 24], ['paint', 24], ['coc', 24], ['folder', 22], ['v8', 24]].map(([n, s]) => `<button aria-label="${n}">${icon(n, s)}</button>`).join('')}</nav>
<div class="t"><div class="d"><span>Desktop</span><sup>»</sup></div>${icon('people', 16)}
<div class="w">${icon('weather', 25)}<span>26°C</span><span>Mưa rào</span></div>
<div class="i">${icon('tup', 14)}${icon('net', 17)}${icon('vol', 17)}</div><div class="i">${icon('pen', 16)}${icon('kbd', 24, 18)}</div>
<time>2:28 PM<br>7/26/2023</time><div class="n">${icon('notif', 16)}<i>3</i></div></div>`);

def('matrix-app', `
:host{display:flex;flex-direction:column;height:100vh}
main{display:flex;flex:1;min-height:0}`,
() => `<title-bar></title-bar><menu-bar></menu-bar><main><side-palette></side-palette><work-frame></work-frame></main><task-bar></task-bar>`);
</script>
</body>
</html>
